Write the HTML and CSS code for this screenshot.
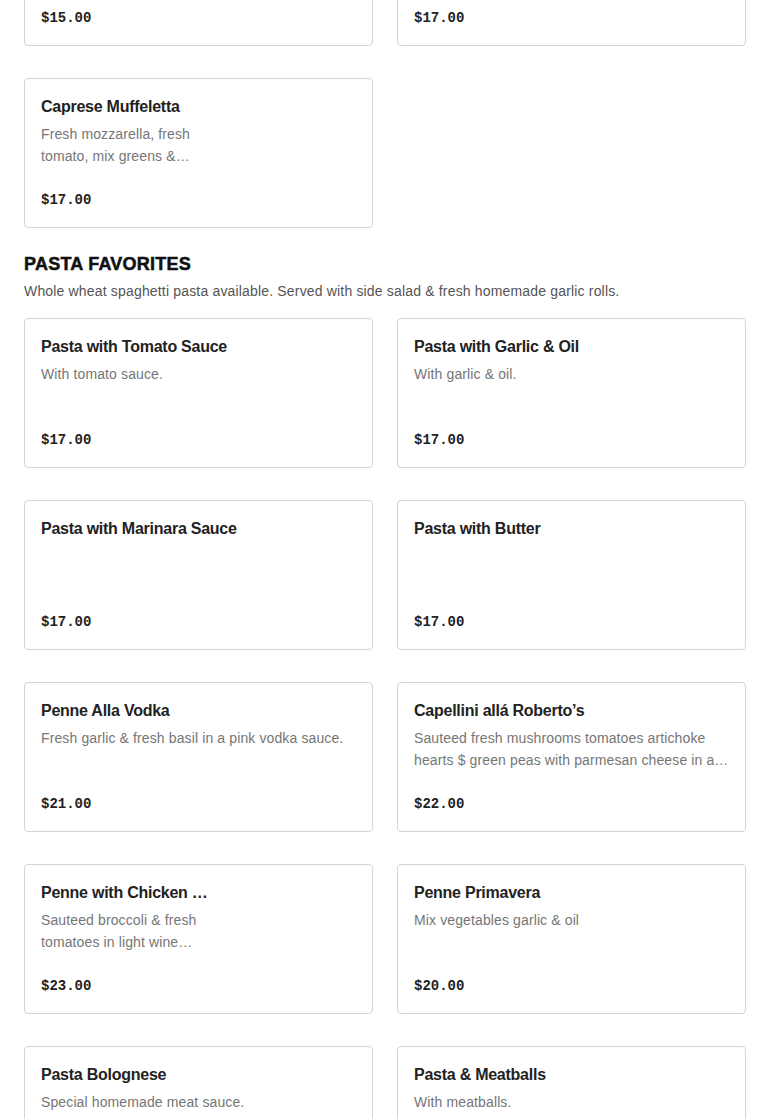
FILE: index.html
```html
<!DOCTYPE html>
<html>
<head>
<meta charset="utf-8">
<link rel="stylesheet" href="styles.css">
</head>
<body>
<main class="menu">
  <section class="section section-prev">
    <div class="grid">
      <div class="card">
        <div class="text"><h3 class="title">Italian Sandwich</h3><p class="desc">Fresh homemade bread.</p></div>
        <div class="price">$15.00</div>
      </div>
      <div class="card">
        <div class="text"><h3 class="title">Chicken Sandwich</h3><p class="desc">Fresh homemade bread.</p></div>
        <div class="price">$17.00</div>
      </div>
      <div class="card narrow">
        <div class="text"><h3 class="title">Caprese Muffeletta</h3><p class="desc">Fresh mozzarella, fresh tomato, mix greens &amp; balsamic glaze on homemade bread.</p></div>
        <div class="price">$17.00</div>
      </div>
    </div>
  </section>

  <section class="section">
    <h2 class="section-title">PASTA FAVORITES</h2>
    <p class="section-desc">Whole wheat spaghetti pasta available. Served with side salad &amp; fresh homemade garlic rolls.</p>
    <div class="grid">
      <div class="card">
        <div class="text"><h3 class="title">Pasta with Tomato Sauce</h3><p class="desc">With tomato sauce.</p></div>
        <div class="price">$17.00</div>
      </div>
      <div class="card">
        <div class="text"><h3 class="title">Pasta with Garlic &amp; Oil</h3><p class="desc">With garlic &amp; oil.</p></div>
        <div class="price">$17.00</div>
      </div>
      <div class="card">
        <div class="text"><h3 class="title">Pasta with Marinara Sauce</h3></div>
        <div class="price">$17.00</div>
      </div>
      <div class="card">
        <div class="text"><h3 class="title">Pasta with Butter</h3></div>
        <div class="price">$17.00</div>
      </div>
      <div class="card">
        <div class="text"><h3 class="title">Penne Alla Vodka</h3><p class="desc">Fresh garlic &amp; fresh basil in a pink vodka sauce.</p></div>
        <div class="price">$21.00</div>
      </div>
      <div class="card">
        <div class="text"><h3 class="title">Capellini allá Roberto’s</h3><p class="desc">Sauteed fresh mushrooms tomatoes artichoke hearts $ green peas with parmesan cheese in a light cream sauce.</p></div>
        <div class="price">$22.00</div>
      </div>
      <div class="card narrow">
        <div class="text"><h3 class="title">Penne with Chicken &amp; Broccoli</h3><p class="desc">Sauteed broccoli &amp; fresh tomatoes in light wine sauce.</p></div>
        <div class="price">$23.00</div>
      </div>
      <div class="card">
        <div class="text"><h3 class="title">Penne Primavera</h3><p class="desc">Mix vegetables garlic &amp; oil</p></div>
        <div class="price">$20.00</div>
      </div>
      <div class="card">
        <div class="text"><h3 class="title">Pasta Bolognese</h3><p class="desc">Special homemade meat sauce.</p></div>
        <div class="price">$17.00</div>
      </div>
      <div class="card">
        <div class="text"><h3 class="title">Pasta &amp; Meatballs</h3><p class="desc">With meatballs.</p></div>
        <div class="price">$17.00</div>
      </div>
    </div>
  </section>
</main>
</body>
</html>
```

FILE: styles.css
```css
html, body {
  margin: 0;
  padding: 0;
  background: #ffffff;
}

body {
  font-family: "Liberation Sans", Arial, sans-serif;
  color: #222222;
  overflow: hidden;
}

.menu {
  padding: 0 24px;
  margin-top: -104px;
}

.section {
  margin-bottom: 24px;
}

.section-title {
  margin: 0;
  padding-top: 1px;
  font-size: 18px;
  line-height: 22px;
  font-weight: 900;
  color: #111111;
  letter-spacing: 0.25px;
  -webkit-text-stroke: 0.5px #111111;
}

.section-desc {
  margin: 5px 0 16px;
  font-size: 14px;
  line-height: 22px;
  color: #555555;
  letter-spacing: 0.17px;
}

.grid {
  display: grid;
  grid-template-columns: 1fr 1fr;
  column-gap: 24px;
  row-gap: 32px;
}

.card {
  box-sizing: border-box;
  height: 150px;
  border: 1px solid #d4d4d4;
  border-radius: 4px;
  padding: 16px 16px 17px;
  display: flex;
  flex-direction: column;
  background: #fff;
}

.text {
  min-width: 0;
}

.card.narrow .text {
  width: 172px;
}

.title {
  margin: 0;
  font-size: 16px;
  line-height: 24px;
  font-weight: 700;
  color: #222222;
  letter-spacing: -0.25px;
  white-space: nowrap;
  overflow: hidden;
  text-overflow: ellipsis;
}

.desc {
  margin: 4px 0 0;
  font-size: 14px;
  line-height: 22px;
  max-height: 44px;
  color: #767676;
  letter-spacing: 0.12px;
  display: -webkit-box;
  -webkit-line-clamp: 2;
  -webkit-box-orient: vertical;
  overflow: hidden;
}

.price {
  margin-top: auto;
  font-family: "Liberation Mono", "Courier New", monospace;
  font-weight: 700;
  font-size: 14px;
  line-height: 20px;
  color: #222222;
}
```
